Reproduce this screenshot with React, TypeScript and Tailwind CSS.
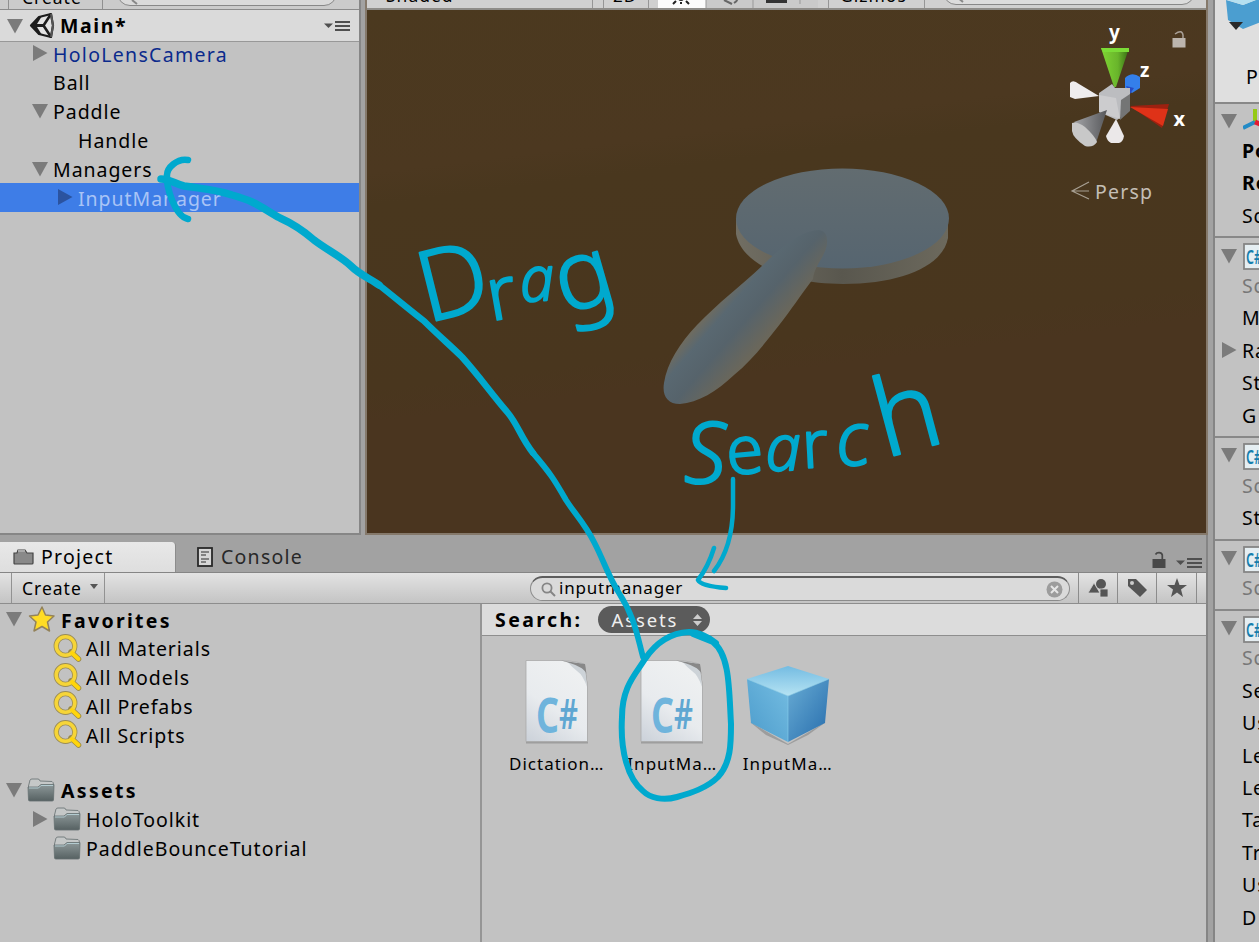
import React from "react";

const text = "whitespace-nowrap font-['Noto_Sans','DejaVu_Sans',sans-serif] leading-none";

function Tri({ open, className = "" }: { open?: boolean; className?: string }) {
  return (
    <svg width="16" height="16" viewBox="0 0 16 16" className={`shrink-0 ${className}`}>
      {open ? <path d="M0 1H16L8 15.5Z" fill="#7b7b7b" /> : <path d="M1 0V16L15.5 8Z" fill="#7b7b7b" />}
    </svg>
  );
}

function MenuGlyph({ className = "" }: { className?: string }) {
  return (
    <svg width="27" height="12" viewBox="0 0 27 12" className={`shrink-0 ${className}`}>
      <path d="M0 3.5H9L4.500 8Z" fill="#4f4f4f" />
      <path d="M11 2H26M11 6H26M11 10H26" stroke="#4f4f4f" strokeWidth="1.800" />
    </svg>
  );
}

function Lock({ color }: { color: string }) {
  return (
    <svg width="14" height="18" viewBox="0 0 14 18" className="shrink-0">
      <rect x="0.500" y="8" width="13" height="9" fill={color} />
      <path d="M3.500 3.500C5 1 9.500 1 10.300 4V8" fill="none" stroke={color} strokeWidth="1.700" />
    </svg>
  );
}

function Magnifier() {
  return (
    <svg width="30" height="29" viewBox="0 0 30 29" className="shrink-0">
      <path d="M18 18L25.500 25" stroke="#9c8a45" strokeWidth="5.500" strokeLinecap="round" />
      <circle cx="12.500" cy="12" r="9.300" fill="none" stroke="#9a8c55" strokeWidth="5.200" />
      <circle cx="12.500" cy="12" r="9.300" fill="none" stroke="#f6d538" strokeWidth="3.600" />
      <path d="M19 19L25.500 25" stroke="#ffd50c" strokeWidth="4" strokeLinecap="round" />
    </svg>
  );
}

function Folder() {
  return (
    <svg width="28" height="24" viewBox="0 0 28 24" className="shrink-0">
      <defs>
        <linearGradient id="folder" x1="0" y1="0" x2="0" y2="1">
          <stop offset="0" stopColor="#8d9899" />
          <stop offset="1" stopColor="#566162" />
        </linearGradient>
      </defs>
      <path d="M1.500 8L3 2Q3.500 1 5 1H11Q12.500 1 13 3L25 3.500Q26.500 4 26.500 7V10H1.500Z" fill="#c5c8c8" stroke="#777f80" />
      <path d="M1 9H11L14 6.500H27L26.500 22Q26.500 23 25 23H3Q1.500 23 1.500 22Z" fill="url(#folder)" stroke="#657071" strokeWidth="0.800" />
      <path d="M2 10H11.500L14 7.500H26" fill="none" stroke="#b3cbd0" />
    </svg>
  );
}

function UnityLogo() {
  return (
    <svg width="27" height="27" viewBox="0 0 27 27" className="shrink-0">
      <path d="M2 13.500L10 5L22 2L24 13.500L22 25L10 22Z" fill="#e2e2e2" stroke="#1c1c1c" strokeWidth="2.200" strokeLinejoin="round" />
      <path d="M2 13.500L10 4.500L13 4L8 12H15V15H8L13 23L10 22.500Z" fill="#1c1c1c" />
      <path d="M14.500 13.500L22 2M7 13.500H15M14.500 13.500L22 25" stroke="#1c1c1c" strokeWidth="2.600" />
      <path d="M22 2L24 13.500L22 25" fill="none" stroke="#555" strokeWidth="2" />
    </svg>
  );
}

function TreeRow({ level, state, label, selected, blue, children, bold, wide }: {
  level: number; state?: "open" | "closed"; label: string; selected?: boolean; blue?: boolean; children?: React.ReactNode; bold?: boolean; wide?: string;
}) {
  const pad = level === 0 ? "pl-[6px]" : level === 1 ? "pl-[32px]" : "pl-[57px]";
  return (
    <div className={`flex h-[28.8px] shrink-0 items-center ${pad} ${selected ? "bg-[#3e7de7]" : ""}`}>
      <div className="flex w-[21px] shrink-0 items-center">
        {state && (selected ? <svg width="16" height="16"><path d="M1 0V16L15.500 8Z" fill="#2b53a0" /></svg> : <Tri open={state === "open"} />)}
      </div>
      {children}
      <span className={`${text} mt-[2px] text-[19.5px] ${wide ?? "tracking-[0.95px]"} ${bold ? "font-bold" : ""} ${selected ? "text-[#a9c4f6]" : blue ? "text-[#0b2a8c]" : "text-black"}`}>{label}</span>
    </div>
  );
}

function Hierarchy() {
  return (
    <div className="flex h-[535px] w-[361px] shrink-0 flex-col overflow-hidden border-r-2 border-b-2 border-[#868686] bg-[#c2c2c2]">
      <div className="flex h-[10px] shrink-0 overflow-hidden border-b border-[#8b8b8b] bg-[#cbcbcb]">
        <div className="ml-2 flex h-[9px] w-[95px] items-end border-x border-[#909090] pl-[13px]">
          <span className={`${text} mb-[3px] text-[17.5px] tracking-[1px]`}>Create</span>
        </div>
        <div className="-mt-[20px] ml-[14px] h-[26px] w-[220px] rounded-full border border-[#888] bg-[#dadada]">
          <svg width="14" height="14" className="mt-[13px] ml-[8px]"><path d="M6 6L11 10" stroke="#888" strokeWidth="2" /></svg>
        </div>
      </div>
      <div className="flex h-[32px] shrink-0 items-center border-b border-[#989898] bg-[#dadada] pl-[7px]">
        <Tri open className="mr-[6px]" />
        <UnityLogo />
        <span className={`${text} ml-[4px] text-[19.5px] font-bold tracking-[1.6px]`}>Main*</span>
        <MenuGlyph className="mr-[8px] ml-auto" />
      </div>
      <div className="-mt-[3px] flex flex-col">
        <TreeRow level={1} state="closed" label="HoloLensCamera" blue wide="tracking-[1.3px]" />
        <TreeRow level={1} label="Ball" />
        <TreeRow level={1} state="open" label="Paddle" />
        <TreeRow level={2} label="Handle" />
        <TreeRow level={1} state="open" label="Managers" />
        <TreeRow level={2} state="closed" label="InputManager" selected />
      </div>
    </div>
  );
}

function SceneDrawing() {
  return (
    <svg width="839" height="523" viewBox="367 10 839 523" className="block">
      <defs>
        <linearGradient id="ground" x1="0" y1="0" x2="0.200" y2="1">
          <stop offset="0" stopColor="#4b391f" /><stop offset="0.300" stopColor="#4c3820" />
          <stop offset="0.360" stopColor="#49371e" /><stop offset="0.700" stopColor="#49361e" />
          <stop offset="0.760" stopColor="#4a351f" /><stop offset="1" stopColor="#4a351f" />
        </linearGradient>
        <linearGradient id="rim"><stop offset="0" stopColor="#716e63" /><stop offset="0.500" stopColor="#59574e" /><stop offset="1" stopColor="#6c695d" /></linearGradient>
        <linearGradient id="face" x1="0" y1="0" x2="0" y2="1"><stop offset="0" stopColor="#626c70" /><stop offset="1" stopColor="#566570" /></linearGradient>
        <linearGradient id="handle" gradientUnits="userSpaceOnUse" x1="719" y1="301" x2="764" y2="340">
          <stop offset="0" stopColor="#6d6b60" /><stop offset="0.200" stopColor="#596871" /><stop offset="0.550" stopColor="#56636b" /><stop offset="1" stopColor="#6a675b" />
        </linearGradient>
        <linearGradient id="green"><stop offset="0" stopColor="#80d534" /><stop offset="0.600" stopColor="#69b52b" /><stop offset="1" stopColor="#376c14" /></linearGradient>
        <linearGradient id="grey"><stop offset="0" stopColor="#a3a4a7" /><stop offset="1" stopColor="#57585b" /></linearGradient>
      </defs>
      <rect x="367" y="10" width="839" height="523" fill="url(#ground)" />
      <path d="M736 218V234C741 262 783 284 843 284C901 284 943 266 948 238V218Z" fill="url(#rim)" />
      <ellipse cx="842.500" cy="218.500" rx="106.500" ry="50" fill="url(#face)" />
      <path d="M763 265C782 246 803 230 819 230Q828 231 827 243C826 256 814 266 813 279C800 296 791 310 780 324C766 342 752 360 734 375C717 391 698 403 680 404C667 404 662 395 664 383C667 363 680 343 697 325C718 303 742 285 763 265Z" fill="url(#handle)" />
      <path d="M1070 83Q1073 79 1079 84L1099 96L1075 99L1070 97Z" fill="#eeeced" />
      <path d="M1101 48H1129L1116 87H1114Z" fill="url(#green)" /><path d="M1101 48H1129V52H1103Z" fill="#7bdc37" />
      <path d="M1125 78Q1132 71 1140 77V88L1132 93L1125 88Z" fill="#347fea" /><path d="M1126 86L1134 88L1130 94Z" fill="#274bc2" />
      <path d="M1099 93L1112 84L1115 88L1130 88L1130 110L1117 120L1099 112Z" fill="#bcbdc0" />
      <path d="M1099 95L1116 98L1120 119L1099 112Z" fill="#ccccce" /><path d="M1121 100L1130 94V111L1120 120Z" fill="#747575" />
      <path d="M1116 119L1124 136Q1123 142 1119 143H1111Q1107 141 1106 136Z" fill="#ebe8e9" />
      <path d="M1107 110L1074 122L1096 143Z" fill="url(#grey)" /><path d="M1072 123Q1077 121 1085 127Q1095 136 1097 142Q1093 148 1085 146Q1073 138 1072 131Z" fill="#c8c8c8" />
      <path d="M1130 106L1169 104L1162 128Z" fill="#9d2110" /><path d="M1130 107L1168 109L1163 126Z" fill="#df3218" />
      <text x="1109" y="39" fill="white" fontSize="19" fontWeight="bold" fontFamily="Noto Sans, sans-serif">y</text>
      <text x="1140" y="77" fill="white" fontSize="19" fontWeight="bold" fontFamily="Noto Sans, sans-serif">z</text>
      <text x="1173.500" y="126" fill="white" fontSize="20" fontWeight="bold" fontFamily="Noto Sans, sans-serif">x</text>
      <rect x="1172.500" y="38" width="13" height="9.500" fill="#bcb5ae" /><path d="M1175 34Q1182 29 1183 35V38" fill="none" stroke="#a9a097" strokeWidth="1.500" />
      <path d="M1089 182L1072 191L1089 199M1073 191H1089" fill="none" stroke="#a79f92" strokeWidth="1.200" />
      <text x="1095" y="199" fill="#c4beb5" fontSize="19.500" letterSpacing="1.200" fontFamily="Noto Sans, sans-serif">Persp</text>
    </svg>
  );
}

function Scene() {
  return (
    <div className="flex h-[535px] w-[843px] shrink-0 flex-col border-x-2 border-b-2 border-[#85796b] bg-[#d0d0d0]">
      <div className="flex h-[10px] shrink-0 overflow-hidden border-b-2 border-[#8e8c88] text-black">
        <div className="flex w-[226px] items-end border-r border-[#969696] pl-[19px]"><span className={`${text} mb-[4px] text-[17.5px] tracking-[1px]`}>Shaded</span></div>
        <div className="ml-[10px] flex w-[46px] items-end border-x border-[#969696] pl-[9px]"><span className={`${text} mb-[4px] text-[17px] tracking-[1px]`}>2D</span></div>
        <svg width="160" height="8" className="ml-[9px] bg-[#cacaca]">
          <rect width="48" height="8" fill="#fcfcfc" /><circle cx="23" cy="-2" r="3" fill="#222" /><path d="M15 4L18 1M23 4V2M31 4L28 1" stroke="#222" strokeWidth="2" />
          <path d="M48 0V8M95 0V8" stroke="#999" /><path d="M66 0L74 4M76 3Q79 1 79 0" stroke="#666" strokeWidth="2" fill="none" /><path d="M108 0H129V3H108Z" fill="#333" /><path d="M142 0V4" stroke="#999" />
        </svg>
        <div className="ml-[10px] flex w-[97px] items-end border-x border-[#969696] pl-[11px]"><span className={`${text} mb-[4px] text-[17.5px] tracking-[1px]`}>Gizmos</span></div>
        <div className="-mt-[21px] ml-auto mr-[11px] h-[26px] w-[252px] rounded-full border border-[#888] bg-[#dcdcdc]">
          <svg width="14" height="10" className="mt-[17px] ml-[9px]"><path d="M4 0L10 5" stroke="#888" strokeWidth="2" /></svg>
        </div>
      </div>
      <SceneDrawing />
    </div>
  );
}

function CSharpPage() {
  return (
    <svg width="64" height="84" viewBox="0 0 64 84">
      <defs><linearGradient id="page" x1="0" y1="1" x2="0.500" y2="0"><stop offset="0" stopColor="#cbd1d9" /><stop offset="0.500" stopColor="#e8ebee" /><stop offset="1" stopColor="#eef0f1" /></linearGradient></defs>
      <path d="M1 1H40L60 5L63 28V83.500H1Z" fill="#8f8f8f" opacity="0.700" />
      <path d="M1 0.500H39Q54 2 59 4Q61 16 62.500 26V81.500H1Z" fill="url(#page)" stroke="#aaa" strokeWidth="0.800" />
      <path d="M42 1.500L59.500 4L62 27Q58 15 52 11Q47 7 42 1.500Z" fill="#cdd3d8" /><path d="M36 0.500L60 4L61.500 14Q59 6 36 0.500Z" fill="#888" />
      <text x="11" y="72.500" fontFamily="Noto Sans, sans-serif" fontSize="49" fontWeight="bold" fill="#6fb4dc" textLength="23" lengthAdjust="spacingAndGlyphs">C</text>
      <text x="34" y="69" fontFamily="Noto Sans, sans-serif" fontSize="41" fontWeight="600" fill="#5fa7d2" textLength="19" lengthAdjust="spacingAndGlyphs">#</text>
    </svg>
  );
}

function Cube({ className = "" }: { className?: string }) {
  return (
    <svg width="84" height="80" viewBox="0 0 84 80" className={className}>
      <defs>
        <linearGradient id="ctop" x1="0" y1="0" x2="0" y2="1"><stop offset="0" stopColor="#74bce2" /><stop offset="1" stopColor="#b6e3f3" /></linearGradient>
        <linearGradient id="cleft" x1="0" y1="1" x2="1" y2="0"><stop offset="0" stopColor="#4b9bcb" /><stop offset="1" stopColor="#75bde2" /></linearGradient>
        <linearGradient id="cright" x1="0" y1="0" x2="1" y2="1"><stop offset="0" stopColor="#69add5" /><stop offset="1" stopColor="#266cac" /></linearGradient>
      </defs>
      <path d="M4 57L42 79L80 57L62 70L42 80L20 70Z" fill="#777" opacity="0.500" />
      <path d="M42 1L83 14L42 31L1 14Z" fill="url(#ctop)" /><path d="M1 14L42 31V77L5 58Z" fill="url(#cleft)" /><path d="M42 31L83 14L79 58L42 77Z" fill="url(#cright)" />
      <path d="M1 14L42 31L83 14M42 31V77" fill="none" stroke="#8bd0ed" opacity="0.600" />
    </svg>
  );
}

function Asset({ label, cube }: { label: string; cube?: boolean }) {
  return (
    <div className="flex w-[115.5px] shrink-0 flex-col items-center">
      <div className="flex h-[90px] items-start">{cube ? <Cube className="mt-[5px]" /> : <CSharpPage />}</div>
      <span className={`${text} mt-[5px] text-[17px] tracking-[1px]`}>{label}</span>
    </div>
  );
}

function Project() {
  return (
    <div className="flex min-h-0 flex-1 flex-col">
      <div className="flex h-[38px] shrink-0 items-end border-b border-[#858585] bg-[#a2a2a2]">
        <div className="flex h-[30px] w-[176px] shrink-0 items-center rounded-tr border-r border-[#8c8c8c] bg-gradient-to-b from-[#e8e8e8] to-[#dedede] pl-[13px]">
          <svg width="21" height="18" viewBox="0 0 21 18"><path d="M1 5H4L5 2H12L14 5H20V15Q20 16 19 16H2Q1 16 1 15Z" fill="#898989" stroke="#444" strokeWidth="1.200" /><path d="M5 3H12" stroke="#aaa" strokeWidth="2" /></svg>
          <span className={`${text} ml-[7px] text-[19.5px] tracking-[1.25px]`}>Project</span>
        </div>
        <div className="flex h-[30px] items-center pl-[21px]">
          <svg width="17" height="20" viewBox="0 0 17 20"><rect x="1" y="1" width="14" height="18" fill="#d6d6d6" stroke="#292929" strokeWidth="1.800" /><path d="M4 5H12M4 8H9M4 12H12M4 15H9" stroke="#666" strokeWidth="1.300" /></svg>
          <span className={`${text} ml-[7px] text-[19.5px] tracking-[1.25px] text-[#282828]`}>Console</span>
        </div>
        <div className="mb-[3px] ml-auto flex items-end gap-[10px] pr-[3px]"><Lock color="#484848" /><MenuGlyph /></div>
      </div>
      <div className="flex h-[31px] shrink-0 items-stretch border-b border-[#8d8d8d] bg-gradient-to-b from-[#e3e3e3] to-[#c4c4c4]">
        <div className="ml-[11px] flex w-[94px] shrink-0 items-center border-x border-[#929292] pl-[10px]">
          <span className={`${text} mt-px text-[17.5px] tracking-[1px]`}>Create</span>
          <svg width="8" height="5" className="mb-1 ml-[8px]"><path d="M0 0H8L4 5Z" fill="#555" /></svg>
        </div>
        <div className="mt-[3px] ml-[425px] flex h-[25px] w-[540px] shrink-0 items-center rounded-full border border-t-2 border-[#8b8b8b] border-t-[#5d5d5d] bg-[#dadada] pl-[10px]">
          <svg width="15" height="15" viewBox="0 0 15 15"><circle cx="6" cy="6" r="4.600" fill="none" stroke="#858585" strokeWidth="1.800" /><path d="M9 9L14 14" stroke="#858585" strokeWidth="2" /></svg>
          <span className={`${text} mb-[3px] ml-[3px] text-[17px] tracking-[0.8px]`}>inputmanager</span>
          <svg width="17" height="17" viewBox="0 0 17 17" className="mr-[6px] ml-auto"><circle cx="8.500" cy="8.500" r="8" fill="#9c9c9c" /><path d="M5 5L12 12M12 5L5 12" stroke="#e5e5e5" strokeWidth="2" /></svg>
        </div>
        <div className="ml-[8px] grid w-[119px] shrink-0 grid-cols-3 border-x border-[#8c8c8c]">
          <div className="flex items-center justify-center border-r border-[#8c8c8c]"><svg width="21" height="20" viewBox="0 0 21 20"><circle cx="13" cy="6" r="5" fill="#555" /><path d="M0 15L6 5L12 15ZM12 11H20V19H12Z" fill="#555" stroke="#cfcfcf" strokeWidth="0.800" /></svg></div>
          <div className="flex items-center justify-center border-r border-[#8c8c8c]"><svg width="21" height="20" viewBox="0 0 21 20"><path d="M1 1H9L20 12L13 19L1 8Z" fill="#555" /><circle cx="5" cy="5" r="2" fill="#ccc" /></svg></div>
          <div className="flex items-center justify-center"><svg width="20" height="20" viewBox="0 0 20 20"><path d="M10 0L12.500 7H20L14 11.500L16 19L10 14.500L4 19L6 11.500L0 7H7.500Z" fill="#555" /></svg></div>
        </div>
      </div>
      <div className="flex min-h-0 flex-1">
        <div className="flex w-[480px] shrink-0 flex-col pt-[1px]">
          <TreeRow level={0} state="open" label="Favorites" bold wide="tracking-[2.3px]">
            <svg width="28" height="28" viewBox="0 0 28 28" className="mr-[6px] shrink-0"><path d="M15 2L18.500 10L27 11L20.500 17L22.500 26L15 21.500L7 26L9 17L2.500 11L11 10Z" fill="#ffdc24" stroke="#93825a" strokeWidth="1.500" strokeLinejoin="round" /></svg>
          </TreeRow>
          {["All Materials", "All Models", "All Prefabs", "All Scripts"].map((s) => (
            <TreeRow key={s} level={1} label={s}><div className="mr-[3px]"><Magnifier /></div></TreeRow>
          ))}
          <div className="h-[26.6px]" />
          <TreeRow level={0} state="open" label="Assets" bold wide="tracking-[2.3px]"><div className="mr-[6px]"><Folder /></div></TreeRow>
          <TreeRow level={1} state="closed" label="HoloToolkit"><div className="mr-[5px]"><Folder /></div></TreeRow>
          <TreeRow level={1} label="PaddleBounceTutorial" wide="tracking-[1px]"><div className="mr-[5px]"><Folder /></div></TreeRow>
        </div>
        <div className="flex min-w-0 flex-1 flex-col border-l-2 border-[#959595]">
          <div className="flex h-[32px] shrink-0 items-center border-b border-[#8e8e8e] bg-[#dcdcdc] pl-[13px]">
            <span className={`${text} mt-px text-[19.5px] font-bold tracking-[2.4px]`}>Search:</span>
            <div className="ml-[16px] flex h-[27px] w-[112px] items-center rounded-full bg-[#5b5b5b] pl-[13px] text-[#efefef]">
              <span className={`${text} mt-px text-[18.5px] tracking-[1.9px]`}>Assets</span>
              <svg width="9" height="12" viewBox="0 0 9 12" className="mr-[8px] ml-auto"><path d="M0 5L4.500 0L9 5ZM0 7H9L4.500 12Z" fill="#ccc" /></svg>
            </div>
          </div>
          <div className="flex pt-[24px] pl-[17px]"><Asset label="Dictation…" /><Asset label="InputMa…" /><Asset label="InputMa…" cube /></div>
        </div>
      </div>
    </div>
  );
}

type Item = { label: string; look?: "bold" | "dim" };

function Section({ items, axes }: { items: Item[]; axes?: boolean }) {
  return (
    <div className="shrink-0 border-t-2 border-[#888] pb-[5.2px]">
      <div className="flex h-[30.6px] items-center pl-[6px]">
        <Tri open className="mt-[4px]" />
        {axes ? (
          <svg width="22" height="22" viewBox="0 0 22 22" className="ml-[6px] shrink-0"><path d="M12 14V1" stroke="#95ca15" strokeWidth="4" /><path d="M12 14L0 20" stroke="#238bc6" strokeWidth="4" /><path d="M12 14L22 18" stroke="#e31b32" strokeWidth="5" /></svg>
        ) : (
          <svg width="24" height="28" viewBox="0 0 24 28" className="mt-[7px] ml-[6px] shrink-0">
            <rect x="1" y="1" width="22" height="25" fill="#e5eef2" stroke="#858585" strokeWidth="1.800" />
            <text x="3" y="21" fontSize="20" fontWeight="600" fill="#167ead" fontFamily="Noto Sans, sans-serif" textLength="16" lengthAdjust="spacingAndGlyphs">C#</text>
          </svg>
        )}
      </div>
      {items.map((it, i) => (
        <div key={i} className="flex h-[32.4px] items-center pl-[27px]">
          {it.label === "Ra" && <Tri className="mr-[5px] -ml-[21px]" />}
          <span className={`${text} mt-px text-[19.5px] tracking-[0.9px] ${it.look === "bold" ? "font-bold" : ""} ${it.look === "dim" ? "text-[#777]" : "text-black"}`}>{it.label}</span>
        </div>
      ))}
    </div>
  );
}

function Inspector() {
  return (
    <div className="flex h-[942px] w-[46px] shrink-0 flex-col overflow-hidden border-l-2 border-[#858585] bg-[#c2c2c2]">
      <div className="flex h-[101.5px] shrink-0 flex-col bg-[#dfdfdf]">
        <svg width="46" height="30" viewBox="0 0 46 30" className="ml-[10px]"><path d="M1 0L18 5L36 -2V22L18 29L3 20Z" fill="#4b9ed0" /><path d="M2 0L18 5L36 -2Z" fill="#b5e0f0" /><path d="M4 22H18L11 30Z" fill="#292929" /></svg>
        <span className={`${text} mt-[37px] ml-[31px] text-[19.5px]`}>P</span>
      </div>
      <Section axes items={[{ label: "Po", look: "bold" }, { label: "Ro", look: "bold" }, { label: "Sc" }]} />
      <Section items={[{ label: "Sc", look: "dim" }, { label: "M" }, { label: "Ra" }, { label: "St" }, { label: "G" }]} />
      <Section items={[{ label: "Sc", look: "dim" }, { label: "St" }]} />
      <Section items={[{ label: "Sc", look: "dim" }]} />
      <Section items={[{ label: "Sc", look: "dim" }, { label: "Se" }, { label: "Us" }, { label: "Le" }, { label: "Le" }, { label: "Ta" }, { label: "Tr" }, { label: "Us" }, { label: "D" }]} />
    </div>
  );
}

function Annotations() {
  return (
    <svg width="1259" height="942" viewBox="0 0 1259 942" className="pointer-events-none absolute top-0 left-0">
      <g fill="none" stroke="#00a9ce" strokeLinecap="round" strokeLinejoin="round">
        <path strokeWidth="7.500" d="M161 179C170 179 175 184 184 186C204 189 214 189 232 195C258 202 263 209 280 218Q298 226 314 240C327 250 342 257 351 266C360 275 371 279 379 285" />
        <path strokeWidth="6.500" d="M379 285C393 296 411 311 424 321C438 335 452 347 462 357C480 377 490 392 508 413C518 425 521 438 533 453" />
        <path strokeWidth="5.800" d="M533 453C550 473 554 479 566 500C575 514 585 524 594 542C604 561 608 576 619 593C635 618 637 635 643 657" />
        <path strokeWidth="6.500" d="M188 160C177 158 167 168 167 175C166 185 174 216 188 219" />
        <path strokeWidth="6" d="M716 643C709 637 698 632 689 632C670 633 655 644 645 659C635 675 622 687 622 717C620 751 628 779 643 791C650 798 663 801 677 797C691 793 707 788 718 777C731 763 731 743 731 724C729 690 730 655 713 642L693 634" />
        <path strokeWidth="4.500" d="M733 479V505C733 526 729 552 714 571M714 548C710 561 705 571 698 580Q701 586 726 588" />
      </g>
      <g fill="#00a9ce" stroke="#00a9ce" strokeWidth="2" strokeLinejoin="round" fontFamily="Noto Sans, sans-serif" fontWeight="300">
        <text>
          <tspan x="427" y="323" rotate="-14" fontSize="98">D</tspan>
          <tspan x="491" y="321" rotate="-10" fontSize="74">r</tspan>
          <tspan x="521" y="302" rotate="-4" fontSize="62" fontStyle="italic">a</tspan>
          <tspan x="564" y="314" rotate="-16" fontSize="96">g</tspan>
        </text>
        <text>
          <tspan x="684" y="483" rotate="0" fontSize="84" fontStyle="italic">S</tspan>
          <tspan x="728" y="475" rotate="-5" fontSize="67">e</tspan>
          <tspan x="766" y="471" rotate="-2" fontSize="64" fontStyle="italic">a</tspan>
          <tspan x="803" y="468" rotate="-3" fontSize="66">r</tspan>
          <tspan x="838" y="467" rotate="-6" fontSize="74" fontStyle="italic">c</tspan>
          <tspan x="885" y="458" rotate="-15" fontSize="108">h</tspan>
        </text>
      </g>
    </svg>
  );
}

export default function App() {
  return (
    <div className="relative flex h-[942px] w-[1259px] overflow-hidden bg-[#a2a2a2]">
      <div className="flex h-[942px] w-[1208px] shrink-0 flex-col border-r-2 border-[#858585] bg-[#c2c2c2]">
        <div className="flex h-[535px] w-[1208px] shrink-0 bg-[#a2a2a2]"><Hierarchy /><div className="w-[4px] shrink-0" /><Scene /></div>
        <Project />
      </div>
      <div className="w-[5px] shrink-0" />
      <Inspector />
      <Annotations />
    </div>
  );
}
